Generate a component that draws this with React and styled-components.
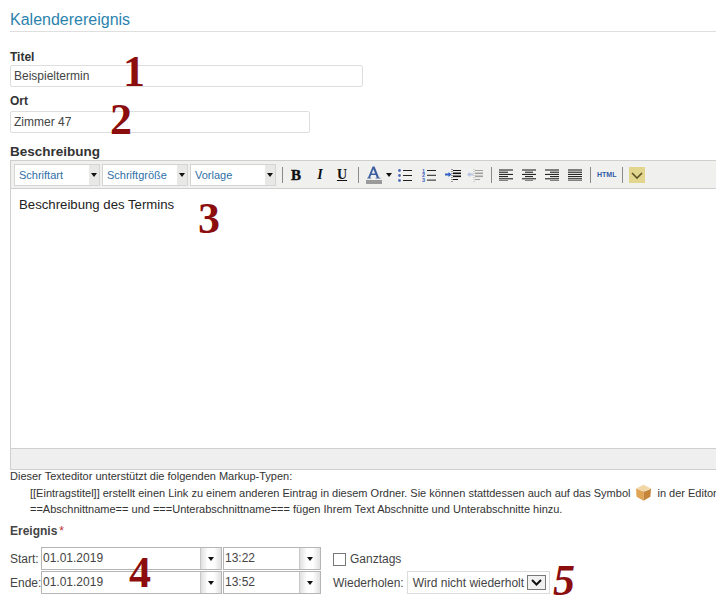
import React from "react";
import styled, { createGlobalStyle } from "styled-components";

const GlobalStyle = createGlobalStyle`
  html, body {
    margin: 0;
    padding: 0;
    background: #fff;
    overflow: hidden;
  }
  body {
    font-family: "Liberation Sans", Arial, sans-serif;
    color: #333;
  }
`;

const Caret = () => (
  <svg width="6" height="4" viewBox="0 0 6 4">
    <path d="M0 0h6L3 4z" fill="#111" />
  </svg>
);

const Lines = ({ rows }) => (
  <svg width="14" height="12" viewBox="0 0 14 12">
    {rows.map(([x1, x2], i) => (
      <rect key={i} x={x1} y={0.5 + i * 2.2} width={x2 - x1} height="1" fill="#111" />
    ))}
  </svg>
);

const BulletIcon = () => (
  <svg width="14" height="13" viewBox="0 0 14 13">
    {[1.5, 6.5, 11.5].map((y) => (
      <g key={y}>
        <circle cx="1.5" cy={y} r="1.4" fill="#4f6cb5" />
        <rect x="5" y={y - 0.5} width="9" height="1" fill="#222" />
      </g>
    ))}
  </svg>
);

const NumberIcon = () => (
  <svg width="14" height="14" viewBox="0 0 14 14">
    {["1", "2", "3"].map((n, i) => (
      <g key={n}>
        <text x="0" y={4.5 + i * 4.6} fontSize="5.5" fontWeight="bold" fontFamily="Liberation Sans" fill="#3f62bb">{n}</text>
        <rect x="5" y={2 + i * 4.8} width="9" height="1" fill="#222" />
      </g>
    ))}
  </svg>
);

const IndentIcon = ({ muted }) => (
  <svg width="16" height="13" viewBox="0 0 16 13" opacity={muted ? 0.35 : 1}>
    <path d="M7 0v13" stroke="#444" strokeDasharray="1 1" />
    <rect x="8" y="1" width="8" height="1" fill="#111" />
    <rect x="8" y="3.5" width="8" height="1.6" fill="#111" />
    <rect x="8" y="6.5" width="8" height="1.6" fill="#111" />
    <rect x="8" y="10" width="5" height="1" fill="#111" />
    {muted ? (
      <path d="M0 5.5l3-2.6v1.6h3v2H3v1.6z" fill="#4a72c8" />
    ) : (
      <path d="M6.5 5.5l-3-2.6v1.6H0v2h3.5v1.6z" fill="#2f5fc4" />
    )}
  </svg>
);

const ColorIcon = () => (
  <svg width="16" height="18" viewBox="0 0 16 18">
    <path d="M1 12.5v-.8h1L6.6.5h2l4.5 11.2h1.4v.8H9.6v-.8h1.2L9.7 9H5.1L4 11.7h1.3v.8zM5.7 7.5h3.4L7.4 3.2z" fill="#3d5f9f" />
    <rect y="14" width="16" height="4" fill="#9a9a9a" />
  </svg>
);

const BoxIcon = () => (
  <svg width="17" height="17" viewBox="0 0 17 17">
    <path d="M8.5 7.5L1 4.4l.6 8.4L8.5 16.8z" fill="#dfa455" />
    <path d="M8.5 7.5L16 4.4l-.6 8.4L8.5 16.8z" fill="#c5853a" />
    <path d="M1 4.4L8.5.8 16 4.4 8.5 7.5z" fill="#f2d7a6" />
    <path d="M9.5 7.2l5.5-2.4" stroke="#fff3dc" strokeWidth="1" opacity="0.7" />
  </svg>
);

const Check = () => (
  <svg width="11" height="7" viewBox="0 0 11 7">
    <path d="M1 1l4.5 4.5L10 1" fill="none" stroke="#111" strokeWidth="2" />
  </svg>
);

const Chevron = () => (
  <svg width="12" height="7" viewBox="0 0 12 7">
    <path d="M1 1l5 5 5-5" fill="none" stroke="#5a5226" strokeWidth="1.6" />
  </svg>
);

const App = () => {
  return (
    <Page>
      <GlobalStyle />
      <Heading>Kalenderereignis</Heading>

      <Label>Titel</Label>
      <TextBox $width={353}>Beispieltermin</TextBox>

      <Label $top={7} $bottom={2}>Ort</Label>
      <TextBox $width={300}>Zimmer 47</TextBox>

      <Label $top={11} $bottom={1} $big>Beschreibung</Label>
      <Editor>
        <Toolbar>
          <Combo>Schriftart<ComboArrow><Caret /></ComboArrow></Combo>
          <Combo>Schriftgröße<ComboArrow><Caret /></ComboArrow></Combo>
          <Combo>Vorlage<ComboArrow><Caret /></ComboArrow></Combo>
          <Sep $left={4} />
          <BoldTool>B</BoldTool>
          <ToolLetter $left={5} $width={20} $italic>I</ToolLetter>
          <ToolLetter $left={2} $width={20} $underline>U</ToolLetter>
          <Sep $left={6} />
          <ToolIcon $left={7} $width={16}><ColorIcon /></ToolIcon>
          <ToolIcon $left={3} $width={8}><Caret /></ToolIcon>
          <ToolIcon $left={5} $width={14}><BulletIcon /></ToolIcon>
          <ToolIcon $left={10} $width={14}><NumberIcon /></ToolIcon>
          <ToolIcon $left={9} $width={16}><IndentIcon /></ToolIcon>
          <ToolIcon $left={6} $width={16}><IndentIcon muted /></ToolIcon>
          <Sep $left={8} />
          <ToolIcon $left={7} $width={14}><Lines rows={[[0, 14], [0, 9], [0, 14], [0, 9], [0, 14], [0, 9]]} /></ToolIcon>
          <ToolIcon $left={9} $width={14}><Lines rows={[[0, 14], [3, 11], [0, 14], [3, 11], [0, 14], [3, 11]]} /></ToolIcon>
          <ToolIcon $left={9} $width={14}><Lines rows={[[0, 14], [5, 14], [0, 14], [5, 14], [0, 14], [5, 14]]} /></ToolIcon>
          <ToolIcon $left={9} $width={14}><Lines rows={[[0, 14], [0, 14], [0, 14], [0, 14], [0, 14], [0, 14]]} /></ToolIcon>
          <Sep $left={8} />
          <HtmlTool>HTML</HtmlTool>
          <Sep $left={7} />
          <YellowButton><Chevron /></YellowButton>
        </Toolbar>
        <EditorBody>Beschreibung des Termins</EditorBody>
        <EditorFooter />
      </Editor>

      <Help>
        <HelpLine>Dieser Texteditor unterstützt die folgenden Markup-Typen:</HelpLine>
        <HelpLine $indent>
          [[Eintragstitel]] erstellt einen Link zu einem anderen Eintrag in diesem Ordner. Sie können stattdessen auch auf das Symbol
          <BoxWrap><BoxIcon /></BoxWrap>
          in der Editor
        </HelpLine>
        <HelpLine $indent>==Abschnittname== und ===Unterabschnittname=== fügen Ihrem Text Abschnitte und Unterabschnitte hinzu.</HelpLine>
      </Help>

      <EventLabel>Ereignis<Star>*</Star></EventLabel>
      <EventGrid>
        <DateRows>
          <DateRow>
            <RowLabel>Start:</RowLabel>
            <Spin $width={181}>01.01.2019<SpinArrow><Caret /></SpinArrow></Spin>
            <Spin $width={98}>13:22<SpinArrow><Caret /></SpinArrow></Spin>
          </DateRow>
          <DateRow>
            <RowLabel>Ende:</RowLabel>
            <Spin $width={181}>01.01.2019<SpinArrow><Caret /></SpinArrow></Spin>
            <Spin $width={98}>13:52<SpinArrow><Caret /></SpinArrow></Spin>
          </DateRow>
        </DateRows>
        <Options>
          <AllDay><CheckBox />Ganztags</AllDay>
          <Repeat>
            Wiederholen:
            <RepeatSelect>
              Wird nicht wiederholt
              <RepeatButton><Check /></RepeatButton>
            </RepeatSelect>
          </Repeat>
        </Options>
      </EventGrid>

      <Mark $x={123} $y={47}>1</Mark>
      <Mark $x={110} $y={95}>2</Mark>
      <Mark $x={198} $y={194}>3</Mark>
      <Mark $x={129} $y={548}>4</Mark>
      <Mark $x={553} $y={556} $italic>5</Mark>
    </Page>
  );
};

export default App;

const Page = styled.div`
  position: relative;
  width: 716px;
  height: 603px;
  overflow: hidden;
  padding: 10px 0 0 10px;
  box-sizing: border-box;
`;
const Heading = styled.h2`
  margin: 0 0 18px;
  height: 21px;
  font-size: 16px;
  line-height: 20px;
  font-weight: normal;
  color: #2b83ad;
  border-bottom: 1px solid #dfdfdf;
`;
const Label = styled.div`
  margin-top: ${(p) => p.$top || 0}px;
  margin-bottom: ${(p) => p.$bottom || 0}px;
  font-size: ${(p) => (p.$big ? 13.5 : 12)}px;
  line-height: 15px;
  font-weight: bold;
  color: #333;
`;
const TextBox = styled.div`
  width: ${(p) => p.$width}px;
  height: 22px;
  box-sizing: border-box;
  border: 1px solid #dedede;
  border-radius: 2px;
  padding-left: 3px;
  font-size: 12px;
  line-height: 20px;
  color: #444;
`;
const Editor = styled.div`
  width: 760px;
  height: 310px;
  box-sizing: border-box;
  border: 1px solid #cfcfcf;
  display: flex;
  flex-direction: column;
`;
const Toolbar = styled.div`
  flex: none;
  height: 28px;
  box-sizing: border-box;
  padding: 3px 0 0 3px;
  background: #f0f0ee;
  border-bottom: 1px solid #cfcfcf;
  display: flex;
  align-items: flex-start;
`;
const Combo = styled.div`
  position: relative;
  width: 86px;
  height: 22px;
  margin-right: 2px;
  box-sizing: border-box;
  border: 1px solid #d4d4d4;
  background: #fff;
  padding-left: 4px;
  font-size: 11px;
  line-height: 20px;
  color: #2f6fa7;
`;
const ComboArrow = styled.span`
  position: absolute;
  top: 0;
  right: 0;
  width: 10px;
  height: 20px;
  background: #e8e8e6;
  display: flex;
  align-items: center;
  justify-content: center;
`;
const Sep = styled.span`
  flex: none;
  width: 1px;
  height: 16px;
  margin: 3px 0 0 ${(p) => p.$left}px;
  background: #8a8a8a;
`;
const BoldTool = styled.span`
  flex: none;
  width: 18px;
  margin-left: 4px;
  text-align: center;
  font-family: "Liberation Serif", serif;
  font-size: 15px;
  line-height: 22px;
  font-weight: bold;
  color: #111;
  -webkit-text-stroke: 0.4px #111;
`;
const ToolLetter = styled.span`
  flex: none;
  width: ${(p) => p.$width}px;
  margin-left: ${(p) => p.$left}px;
  text-align: center;
  font-family: "Liberation Serif", serif;
  font-size: 14px;
  line-height: 22px;
  font-weight: bold;
  color: #111;
  font-style: ${(p) => (p.$italic ? "italic" : "normal")};
  text-decoration: ${(p) => (p.$underline ? "underline" : "none")};
`;
const ToolIcon = styled.span`
  flex: none;
  width: ${(p) => p.$width}px;
  height: 22px;
  margin-left: ${(p) => p.$left}px;
  display: flex;
  align-items: center;
  justify-content: center;
`;
const HtmlTool = styled.span`
  flex: none;
  width: 18px;
  margin-left: 6px;
  font-size: 7px;
  line-height: 22px;
  font-weight: bold;
  color: #2f5aa8;
  white-space: nowrap;
`;
const YellowButton = styled.span`
  flex: none;
  width: 16px;
  height: 16px;
  margin: 3px 0 0 6px;
  background: #e2d68e;
  display: flex;
  align-items: center;
  justify-content: center;
`;
const EditorBody = styled.div`
  flex: 1;
  padding: 8px 0 0 8px;
  font-size: 13.2px;
  line-height: 16px;
  color: #222;
`;
const EditorFooter = styled.div`
  flex: none;
  height: 20px;
  background: #efefef;
  border-top: 1px solid #cfcfcf;
`;
const Help = styled.div`
  margin-top: -2px;
  font-size: 11px;
  line-height: 16px;
  color: #333;
  white-space: nowrap;
`;
const HelpLine = styled.div`
  padding-left: ${(p) => (p.$indent ? 20 : 0)}px;
  display: flex;
  align-items: center;
  white-space: pre;
`;
const BoxWrap = styled.span`
  flex: none;
  margin: 0 5px;
  height: 17px;
`;
const EventLabel = styled.div`
  margin: 7px 0 8px;
  font-size: 12px;
  line-height: 15px;
  font-weight: bold;
  color: #444;
`;
const Star = styled.span`
  color: #c03030;
  margin-left: 2px;
  font-weight: normal;
`;
const EventGrid = styled.div`
  display: flex;
  align-items: flex-start;
`;
const DateRows = styled.div`
  display: flex;
  flex-direction: column;
  gap: 1px;
`;
const DateRow = styled.div`
  display: flex;
  align-items: center;
  height: 23px;
`;
const RowLabel = styled.span`
  width: 31px;
  font-size: 12px;
  color: #444;
`;
const Spin = styled.div`
  position: relative;
  width: ${(p) => p.$width}px;
  height: 23px;
  margin-right: 1px;
  box-sizing: border-box;
  border: 1px solid #b5b5b5;
  padding-left: 1px;
  font-size: 12px;
  line-height: 21px;
  color: #444;
`;
const SpinArrow = styled.span`
  position: absolute;
  top: 0;
  right: 0;
  width: 20px;
  height: 21px;
  border-left: 1px solid #c8c8c8;
  background: linear-gradient(to right, #e0e0e0, #fff 35%, #fff 65%, #e0e0e0);
  display: flex;
  align-items: center;
  justify-content: center;
`;
const Options = styled.div`
  margin-left: 11px;
  display: flex;
  flex-direction: column;
  font-size: 12px;
  color: #444;
`;
const AllDay = styled.div`
  display: flex;
  align-items: center;
  height: 24px;
  gap: 4px;
`;
const CheckBox = styled.span`
  width: 13px;
  height: 13px;
  border: 1px solid #777;
  background: #fff;
  box-sizing: border-box;
`;
const Repeat = styled.div`
  display: flex;
  align-items: center;
  height: 23px;
  gap: 3px;
`;
const RepeatSelect = styled.div`
  width: 143px;
  height: 23px;
  box-sizing: border-box;
  border: 1px solid #dcdcdc;
  padding-left: 5px;
  display: flex;
  align-items: center;
  justify-content: space-between;
`;
const RepeatButton = styled.span`
  width: 19px;
  height: 15px;
  margin-right: 3px;
  box-sizing: border-box;
  border: 1px solid #777;
  background: #f1f1f1;
  display: flex;
  align-items: center;
  justify-content: center;
`;
const Mark = styled.span`
  position: absolute;
  left: ${(p) => p.$x}px;
  top: ${(p) => p.$y}px;
  padding-right: 6px;
  font-family: "Liberation Serif", serif;
  font-size: 44px;
  line-height: 50px;
  font-weight: bold;
  font-style: ${(p) => (p.$italic ? "italic" : "normal")};
  color: #8b0d0d;
`;
